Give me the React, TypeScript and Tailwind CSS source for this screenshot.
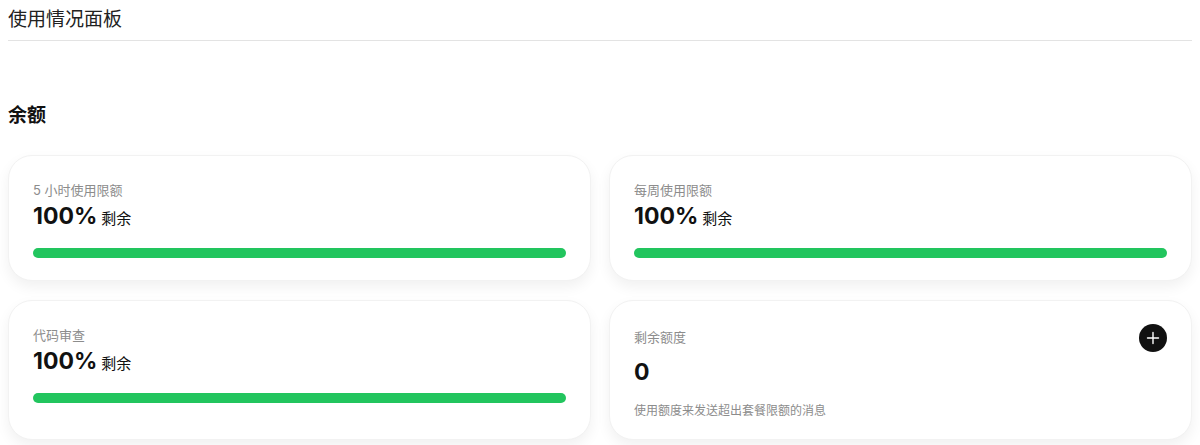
import React from "react";

const font = { fontFamily: '"Inter", "Noto Sans CJK SC", sans-serif' };

function Bar() {
  return <div className="mt-[13px] h-[10px] w-full rounded-full bg-[#22c55e]" />;
}

function UsageCard({ label }: { label: string }) {
  return (
    <div className="rounded-3xl border border-[#f2f2f2] bg-white px-6 pb-[22px] pt-6 shadow-[0_6px_14px_rgba(0,0,0,0.06)]">
      <div className="text-[13px] leading-5 text-[#8c8c8c]">{label}</div>
      <div className="flex items-baseline gap-1 leading-8">
        <span className="text-[23px] font-bold text-[#111]">100%</span>
        <span className="text-[15px] text-[#111]">剩余</span>
      </div>
      <Bar />
    </div>
  );
}

export default function App() {
  return (
    <div className="min-h-[445px] bg-white px-2 text-[#111]" style={font}>
      <div className="flex h-[41px] items-center border-b border-[#e3e3e3]">
        <h1 className="text-[19px] font-normal text-[#222]">使用情况面板</h1>
      </div>
      <h2 className="mt-[61px] text-[19px] font-bold leading-7 text-[#111]">余额</h2>
      <div className="mt-[25px] grid grid-cols-2 gap-x-[18px] gap-y-[19px]">
        <UsageCard label="5 小时使用限额" />
        <UsageCard label="每周使用限额" />
        <UsageCard label="代码审查" />
        <div className="rounded-3xl border border-[#f2f2f2] bg-white px-6 pb-5 pt-[23px] shadow-[0_6px_14px_rgba(0,0,0,0.06)]">
          <div className="flex h-7 items-center justify-between">
            <span className="text-[13px] text-[#8c8c8c]">剩余额度</span>
            <button className="flex h-7 w-7 items-center justify-center rounded-full bg-[#111] text-white">
              <svg width="14" height="14" viewBox="0 0 14 14" fill="none" stroke="white" strokeWidth="1.4" strokeLinecap="round">
                <path d="M7 1.5v11M1.5 7h11" />
              </svg>
            </button>
          </div>
          <div className="mt-1 text-[23px] font-bold leading-8 text-[#111]">0</div>
          <div className="mt-[15px] text-[12px] leading-4 text-[#8c8c8c]">使用额度来发送超出套餐限额的消息</div>
        </div>
      </div>
    </div>
  );
}
